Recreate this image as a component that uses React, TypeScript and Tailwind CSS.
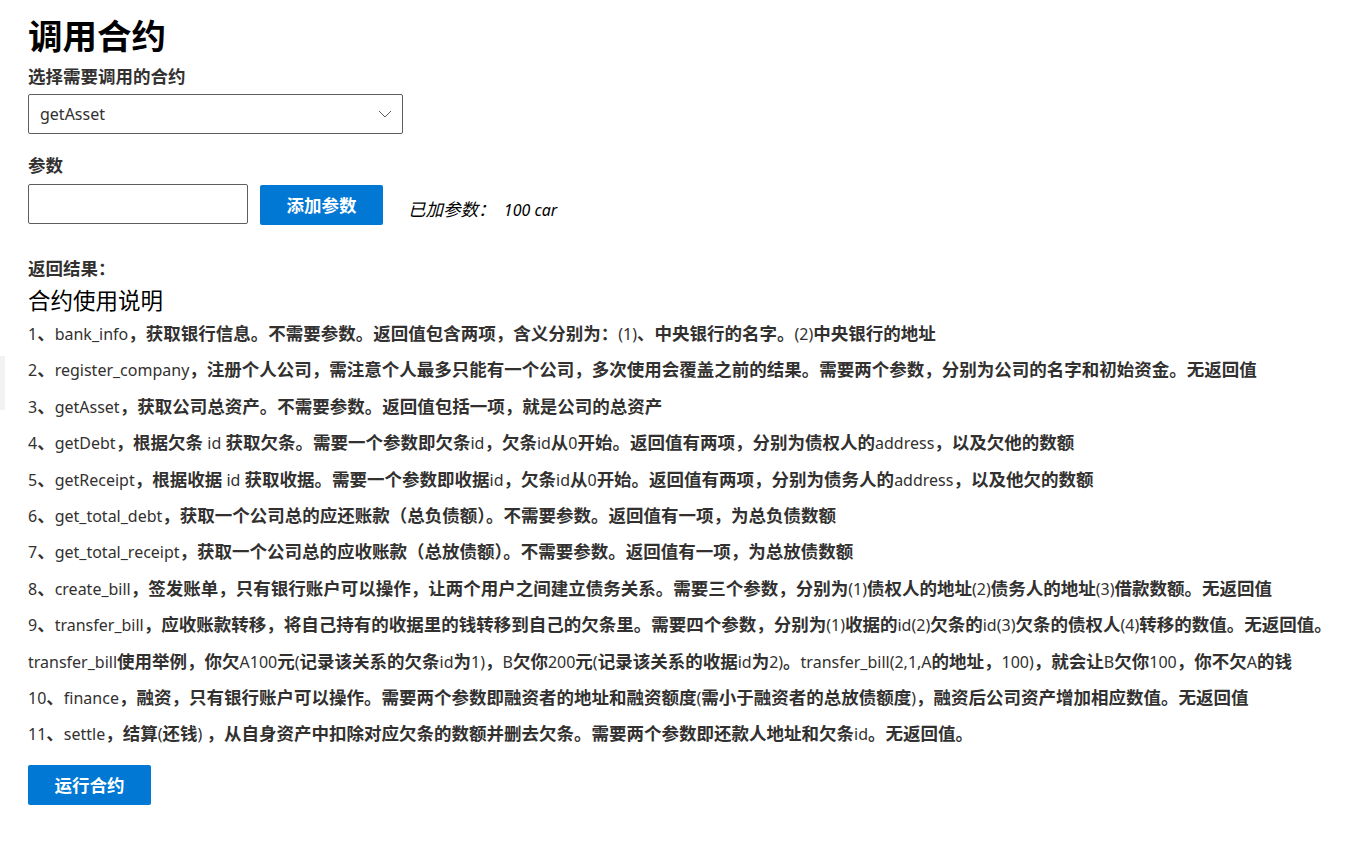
import React from "react";

const FONT = { fontFamily: '"Noto Sans", "Noto Sans CJK SC", sans-serif' };
const CJK = /([\u3000-\u303f\u4e00-\u9fff\uff00-\uffef]+)/;

function Mixed({ text }: { text: string }) {
  const parts = text.split(CJK);
  return (
    <>
      {parts.map((p, i) =>
        i % 2 === 1 ? (
          <span key={i} className="text-[17.5px] font-semibold">{p}</span>
        ) : (
          <span key={i}>{p}</span>
        )
      )}
    </>
  );
}

const lines = [
  "1、bank_info，获取银行信息。不需要参数。返回值包含两项，含义分别为：(1)、中央银行的名字。(2)中央银行的地址",
  "2、register_company，注册个人公司，需注意个人最多只能有一个公司，多次使用会覆盖之前的结果。需要两个参数，分别为公司的名字和初始资金。无返回值",
  "3、getAsset，获取公司总资产。不需要参数。返回值包括一项，就是公司的总资产",
  "4、getDebt，根据欠条 id 获取欠条。需要一个参数即欠条id，欠条id从0开始。返回值有两项，分别为债权人的address，以及欠他的数额",
  "5、getReceipt，根据收据 id 获取收据。需要一个参数即收据id，欠条id从0开始。返回值有两项，分别为债务人的address，以及他欠的数额",
  "6、get_total_debt，获取一个公司总的应还账款（总负债额）。不需要参数。返回值有一项，为总负债数额",
  "7、get_total_receipt，获取一个公司总的应收账款（总放债额）。不需要参数。返回值有一项，为总放债数额",
  "8、create_bill，签发账单，只有银行账户可以操作，让两个用户之间建立债务关系。需要三个参数，分别为(1)债权人的地址(2)债务人的地址(3)借款数额。无返回值",
  "9、transfer_bill，应收账款转移，将自己持有的收据里的钱转移到自己的欠条里。需要四个参数，分别为(1)收据的id(2)欠条的id(3)欠条的债权人(4)转移的数值。无返回值。",
  "transfer_bill使用举例，你欠A100元(记录该关系的欠条id为1)，B欠你200元(记录该关系的收据id为2)。transfer_bill(2,1,A的地址，100)，就会让B欠你100，你不欠A的钱",
  "10、finance，融资，只有银行账户可以操作。需要两个参数即融资者的地址和融资额度(需小于融资者的总放债额度)，融资后公司资产增加相应数值。无返回值",
  "11、settle，结算(还钱) ，从自身资产中扣除对应欠条的数额并删去欠条。需要两个参数即还款人地址和欠条id。无返回值。",
];

export default function App() {
  return (
    <div className="relative min-h-[844px] bg-white pl-[28px] pt-[14px] text-[#323130]" style={FONT}>
      <div className="absolute left-0 top-[356px] h-[54px] w-[5px] bg-[#f3f2f1]" />
      <h1 className="text-[34.5px] font-bold leading-[44px] text-black">调用合约</h1>
      <div className="mt-[8px] text-[17.5px] font-semibold leading-[20px]">选择需要调用的合约</div>
      <div className="mt-[8px] flex h-[40px] w-[375px] items-center justify-between rounded-[2px] border border-[#605e5c] pl-[11px] pr-[10px]">
        <span className="text-[16px] text-[#323130]">getAsset</span>
        <svg width="14" height="8" viewBox="0 0 14 8" fill="none">
          <path d="M1 1l6 6 6-6" stroke="#605e5c" strokeWidth="1" />
        </svg>
      </div>
      <div className="mt-[21px] text-[17.5px] font-semibold leading-[20px]">参数</div>
      <div className="mt-[8px] flex items-center">
        <div className="h-[40px] w-[220px] rounded-[2px] border border-[#605e5c]" />
        <button className="ml-[12px] mt-[2px] flex h-[40px] w-[123px] items-center justify-center rounded-[2px] bg-[#0078d4] text-[17.5px] font-bold text-white">
          添加参数
        </button>
        <span className="ml-[25px] mt-[10px] text-[16px] italic text-black">
          <span className="text-[17.5px]">已加参数：</span>&nbsp; 100 car
        </span>
      </div>
      <div className="mt-[33px] text-[17.5px] font-semibold leading-[20px]">返回结果：</div>
      <div className="mt-[9px] text-[22.5px] leading-[28px] text-black">合约使用说明</div>
      <div className="text-[16px] leading-[36.4px]">
        {lines.map((l, i) => (
          <div key={i} className="h-[36.4px] whitespace-nowrap">
            <Mixed text={l} />
          </div>
        ))}
      </div>
      <button className="mt-[13px] flex h-[40px] w-[123px] items-center justify-center rounded-[2px] bg-[#0078d4] text-[17.5px] font-bold text-white">
        运行合约
      </button>
    </div>
  );
}
